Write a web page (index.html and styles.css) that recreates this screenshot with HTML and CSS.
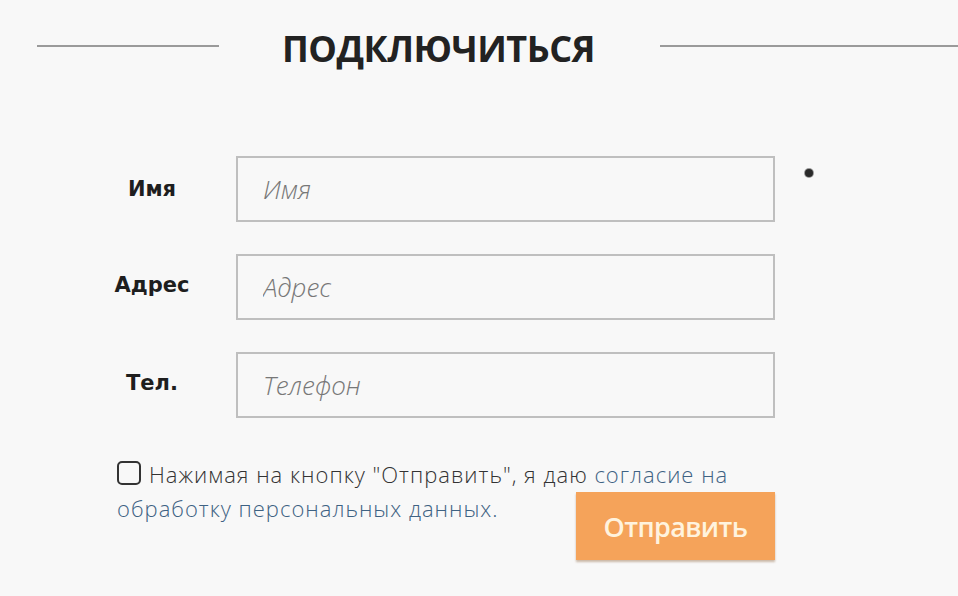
FILE: index.html
```html
<!DOCTYPE html>
<html lang="ru">
<head>
<meta charset="utf-8">
<title>Подключиться</title>
<link rel="stylesheet" href="styles.css">
</head>
<body>
<div class="page">
  <header class="head">
    <span class="rule rule-left"></span>
    <h1 class="title">ПОДКЛЮЧИТЬСЯ</h1>
    <span class="rule rule-right"></span>
  </header>

  <form class="form">
    <div class="row">
      <label class="label" for="f-name">Имя</label>
      <input class="field" id="f-name" type="text" placeholder="Имя">
      <span class="mark"></span>
    </div>
    <div class="row">
      <label class="label label-up" for="f-addr">Адрес</label>
      <input class="field" id="f-addr" type="text" placeholder="Адрес">
    </div>
    <div class="row">
      <label class="label label-up" for="f-tel">Тел.</label>
      <input class="field" id="f-tel" type="text" placeholder="Телефон">
    </div>

    <div class="bottom">
      <p class="consent"><span class="check"></span><span class="dark">Нажимая на кнопку "Отправить", я даю</span> <span class="link">согласие на обработку персональных данных.</span></p>
      <button class="submit" type="button">Отправить</button>
    </div>
  </form>
</div>
</body>
</html>
```

FILE: styles.css
```css
html, body {
  margin: 0;
  padding: 0;
  background: #f8f8f8;
}

.page {
  width: 958px;
  height: 596px;
  overflow: hidden;
  font-family: "Open Sans", "Liberation Sans", sans-serif;
}

.head {
  display: flex;
  align-items: flex-start;
  padding: 24px 0 0 37px;
}

.rule {
  display: block;
  height: 2px;
  background: #9a9a9a;
  margin-top: 21px;
}

.rule-left {
  width: 182px;
}

.rule-right {
  flex: 1;
}

.title {
  margin: 0 65px 0 63px;
  font-size: 36px;
  line-height: 49px;
  font-weight: 700;
  color: #222;
  letter-spacing: -0.5px;
}

.form {
  margin-top: 83px;
}

.row {
  display: flex;
  align-items: center;
  margin-bottom: 32px;
}

.label {
  width: 130px;
  margin-left: 87px;
  margin-right: 19px;
  text-align: center;
  font-family: "DejaVu Sans", sans-serif;
  font-weight: 700;
  font-size: 21px;
  color: #1e1e1e;
}

.label-up {
  margin-bottom: 4px;
}

.field {
  box-sizing: border-box;
  width: 539px;
  height: 66px;
  margin: 0;
  border: 2px solid #bfbfbf;
  background: #f8f8f8;
  padding: 0 0 0 25px;
  font-family: "Open Sans", sans-serif;
  font-size: 26px;
  font-style: italic;
  font-weight: 300;
  color: #333;
  outline: none;
}

.field::placeholder {
  color: #777;
  opacity: 1;
}

.mark {
  align-self: flex-start;
  width: 8px;
  height: 8px;
  border-radius: 50%;
  background: #2a2a2a;
  box-shadow: 0 0 0 1px #999;
  margin: 13px 0 0 30px;
}

.bottom {
  display: grid;
  grid-template-columns: 459px 199px;
  grid-template-rows: 34px auto;
  margin: 39px 0 0 117px;
}

.consent {
  grid-column: 1 / -1;
  grid-row: 1 / span 2;
  width: 640px;
  margin: 0;
  font-size: 22px;
  line-height: 34px;
  font-weight: 300;
  letter-spacing: 1px;
}

.check {
  display: inline-block;
  box-sizing: border-box;
  width: 24px;
  height: 24px;
  border: 2px solid #333;
  border-radius: 5px;
  vertical-align: -2px;
  margin-right: 8px;
}

.dark {
  color: #333;
}

.link {
  color: #3e6283;
}

.submit {
  grid-column: 2;
  grid-row: 2;
  align-self: start;
  margin-top: 1px;
  width: 199px;
  height: 68px;
  border: none;
  border-radius: 0;
  background: #f5a35a;
  box-shadow: 0 2px 2px rgba(120, 70, 20, 0.35);
  color: #fff3de;
  font-family: "Open Sans", sans-serif;
  font-size: 27px;
  font-weight: 600;
  letter-spacing: -0.6px;
  padding: 0;
  cursor: pointer;
}
```
